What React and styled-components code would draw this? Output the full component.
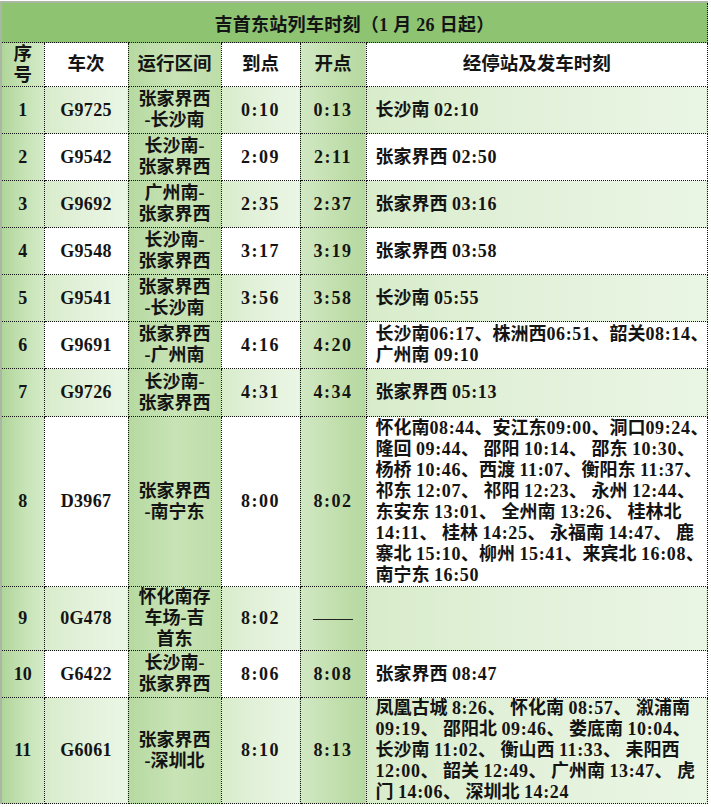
import React from "react";
import styled, { createGlobalStyle } from "styled-components";

const GlobalStyle = createGlobalStyle`
  html, body { margin: 0; padding: 0; background: #fff; }
  body { font-family: "Liberation Serif", "Noto Sans CJK SC", serif; }
`;

const Frame = styled.div`
  width: 711px;
  height: 807px;
  box-sizing: border-box;
  padding: 1px 0 0 0;
  overflow: hidden;
`;

const Table = styled.table`
  width: 708px;
  table-layout: fixed;
  border-collapse: collapse;
  border-top: 2px solid #aab7a3;
  border-left: 2px solid #aab7a3;
  font-weight: 700;
  font-size: 18px;
  color: #141414;
`;

const TitleCell = styled.td`
  height: 39px;
  padding: 0;
  background: #8ec372;
  text-align: center;
  vertical-align: middle;
  border-bottom: 1px dotted #111;
  border-right: 1px dotted #111;
  font-size: 18px;
  letter-spacing: 0.3px;
`;

const gradients = {
  no: "linear-gradient(90deg, #afd599 0%, #c7e3b6 55%, #d4eac7 100%)",
  route: "linear-gradient(90deg, #b6d9a0 0%, #c8e3b6 50%, #bddda8 100%)",
  dep: "linear-gradient(90deg, #d1e8c3 0%, #c2dfae 55%, #b5d89f 100%)",
  light: "linear-gradient(90deg, #d8ecca 0%, #e3f1db 50%, #eaf6e4 100%)",
  white: "#ffffff",
};

const spacing = {
  arr: "1.5px",
  dep: "1.5px",
  train: "0.3px",
};

const Cell = styled.td`
  border: 1px dotted #111;
  padding: ${(p) => (p.$kind === "stops" ? "0 0 0 9px" : "0")};
  height: ${(p) => p.$h}px;
  text-align: ${(p) => (p.$kind === "stops" ? "left" : "center")};
  vertical-align: middle;
  line-height: 21px;
  letter-spacing: ${(p) => spacing[p.$kind] || "0"};
  background: ${(p) =>
    p.$kind === "no" || p.$kind === "route" || p.$kind === "dep"
      ? gradients[p.$kind]
      : p.$light
      ? gradients.light
      : gradients.white};
  &:first-child {
    border-left: none;
  }
`;

const HeadCell = styled(Cell)`
  font-size: 18.5px;
  letter-spacing: 0;
`;

const Line = styled.div`
  white-space: nowrap;
`;

const Num = styled.span`
  letter-spacing: 0.6px;
`;

const Dash = styled.span`
  display: inline-block;
  width: 40px;
  height: 1px;
  background: #222;
  vertical-align: middle;
`;

const rows = [
  { no: "1", train: "G9725", route: ["张家界西", "-长沙南"], arr: "0:10", dep: "0:13", stops: ["长沙南 02:10"], h: 46 },
  { no: "2", train: "G9542", route: ["长沙南-", "张家界西"], arr: "2:09", dep: "2:11", stops: ["张家界西 02:50"], h: 46 },
  { no: "3", train: "G9692", route: ["广州南-", "张家界西"], arr: "2:35", dep: "2:37", stops: ["张家界西 03:16"], h: 46 },
  { no: "4", train: "G9548", route: ["长沙南-", "张家界西"], arr: "3:17", dep: "3:19", stops: ["张家界西 03:58"], h: 46 },
  { no: "5", train: "G9541", route: ["张家界西", "-长沙南"], arr: "3:56", dep: "3:58", stops: ["长沙南 05:55"], h: 46 },
  { no: "6", train: "G9691", route: ["张家界西", "-广州南"], arr: "4:16", dep: "4:20", stops: ["长沙南06:17、株洲西06:51、韶关08:14、", "广州南 09:10"], h: 46 },
  { no: "7", train: "G9726", route: ["长沙南-", "张家界西"], arr: "4:31", dep: "4:34", stops: ["张家界西 05:13"], h: 47 },
  {
    no: "8", train: "D3967", route: ["张家界西", "-南宁东"], arr: "8:00", dep: "8:02", h: 169,
    stops: [
      "怀化南08:44、安江东09:00、洞口09:24、",
      "隆回 09:44、 邵阳 10:14、 邵东 10:30、",
      "杨桥 10:46、西渡 11:07、衡阳东 11:37、",
      "祁东 12:07、 祁阳 12:23、 永州 12:44、",
      "东安东 13:01、 全州南 13:26、 桂林北",
      "14:11、 桂林 14:25、 永福南 14:47、 鹿",
      "寨北 15:10、柳州 15:41、来宾北 16:08、",
      "南宁东 16:50",
    ],
  },
  { no: "9", train: "0G478", route: ["怀化南存", "车场-吉", "首东"], arr: "8:02", dep: null, stops: [], h: 63 },
  { no: "10", train: "G6422", route: ["长沙南-", "张家界西"], arr: "8:06", dep: "8:08", stops: ["张家界西 08:47"], h: 46 },
  {
    no: "11", train: "G6061", route: ["张家界西", "-深圳北"], arr: "8:10", dep: "8:13", h: 105,
    stops: [
      "凤凰古城 8:26、 怀化南 08:57、 溆浦南",
      "09:19、 邵阳北 09:46、 娄底南 10:04、",
      "长沙南 11:02、 衡山西 11:33、 耒阳西",
      "12:00、 韶关 12:49、 广州南 13:47、 虎",
      "门 14:06、 深圳北 14:24",
    ],
  },
];

function StopLine({ text }) {
  const parts = text.split(/([0-9:]+)/);
  return (
    <Line>
      {parts.map((p, i) => (/^[0-9:]+$/.test(p) ? <Num key={i}>{p}</Num> : p))}
    </Line>
  );
}

export default function App() {
  return (
    <>
      <GlobalStyle />
      <Frame>
        <Table>
          <colgroup>
            <col style={{ width: 43 }} />
            <col style={{ width: 84 }} />
            <col style={{ width: 93 }} />
            <col style={{ width: 79 }} />
            <col style={{ width: 66 }} />
            <col />
          </colgroup>
          <tbody>
            <tr>
              <TitleCell colSpan={6}>吉首东站列车时刻（1 月 26 日起）</TitleCell>
            </tr>
            <tr>
              <HeadCell $kind="no" $h={43}>
                <Line>序</Line>
                <Line>号</Line>
              </HeadCell>
              <HeadCell $kind="train" $h={43}>车次</HeadCell>
              <HeadCell $kind="route" $h={43}>运行区间</HeadCell>
              <HeadCell $kind="arr" $h={43}>到点</HeadCell>
              <HeadCell $kind="dep" $h={43}>开点</HeadCell>
              <HeadCell $kind="head" $h={43}>经停站及发车时刻</HeadCell>
            </tr>
            {rows.map((r, i) => {
              const light = i % 2 === 0;
              return (
                <tr key={r.no}>
                  <Cell $kind="no" $h={r.h}>{r.no}</Cell>
                  <Cell $kind="train" $light={light} $h={r.h}>{r.train}</Cell>
                  <Cell $kind="route" $h={r.h}>
                    {r.route.map((l) => (
                      <Line key={l}>{l}</Line>
                    ))}
                  </Cell>
                  <Cell $kind="arr" $light={light} $h={r.h}>{r.arr}</Cell>
                  <Cell $kind="dep" $h={r.h}>{r.dep ? r.dep : <Dash />}</Cell>
                  <Cell $kind="stops" $light={light} $h={r.h}>
                    {r.stops.map((l) => (
                      <StopLine key={l} text={l} />
                    ))}
                  </Cell>
                </tr>
              );
            })}
          </tbody>
        </Table>
      </Frame>
    </>
  );
}
